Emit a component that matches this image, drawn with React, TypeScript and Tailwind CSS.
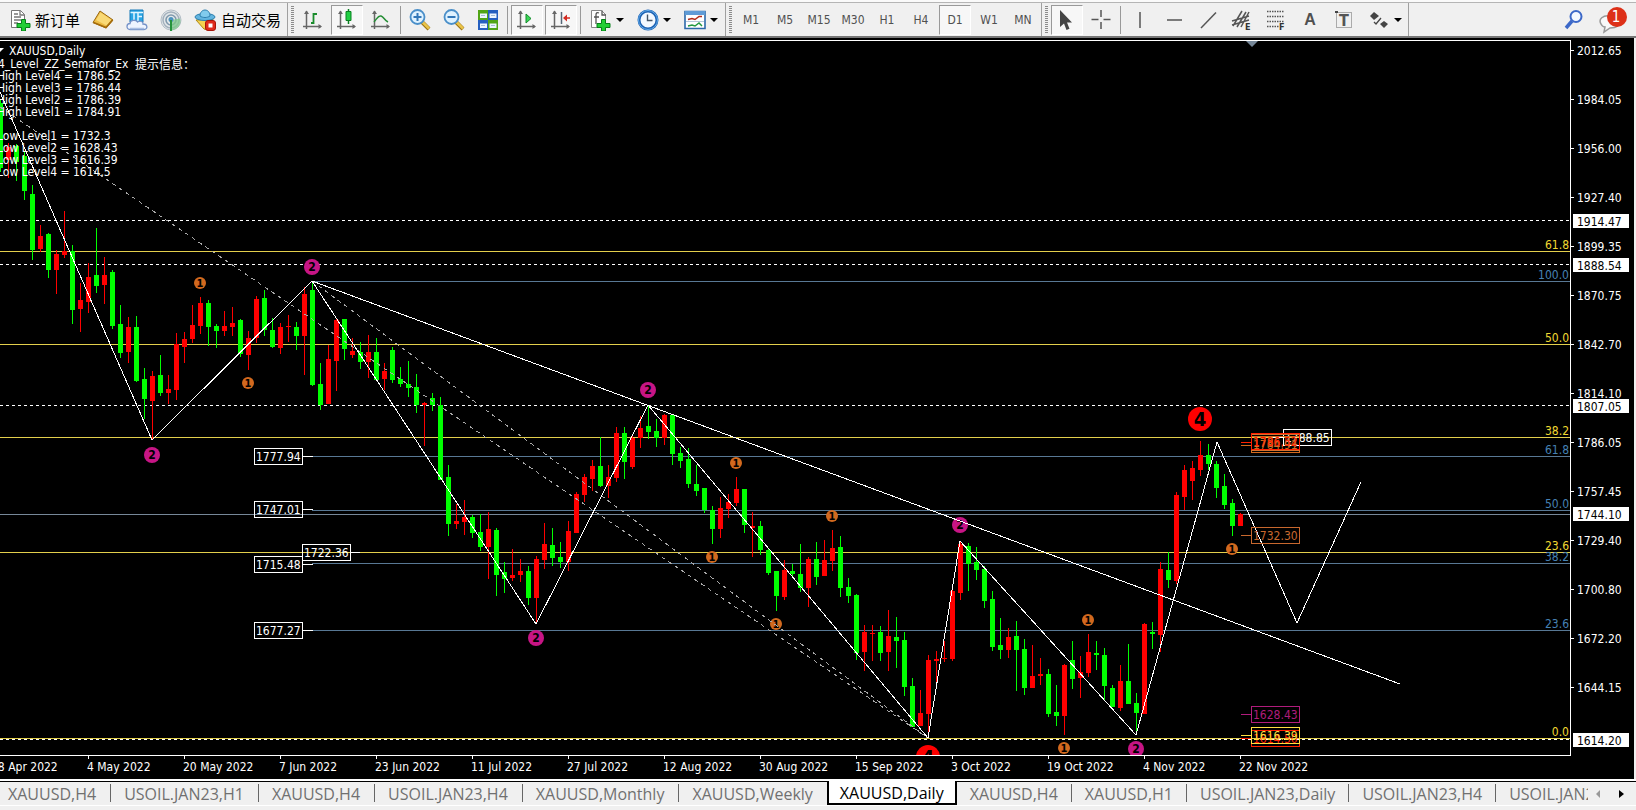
import type { ReactNode } from "react";
import { clsx } from "clsx";

type Candle = [color: "r" | "g", high: number, top: number, bottom: number, low: number];

// one candle every 8 units, starting at the left edge of the plot
const candles: Candle[] = [
  ["g", 100, 103, 168, 172], ["r", 143, 147, 160, 178], ["g", 144, 146, 162, 181], ["g", 152, 156, 191, 200],
  ["g", 185, 194, 250, 260], ["r", 225, 236, 249, 252], ["g", 233, 234, 270, 278], ["r", 250, 254, 270, 294],
  ["r", 211, 251, 255, 258], ["g", 245, 251, 310, 324], ["r", 283, 300, 309, 332], ["r", 263, 277, 302, 313],
  ["g", 228, 275, 286, 293], ["r", 257, 275, 285, 304], ["g", 270, 272, 326, 329], ["g", 305, 324, 353, 358],
  ["r", 317, 327, 352, 363], ["g", 316, 327, 381, 382], ["g", 368, 379, 399, 419], ["r", 371, 376, 401, 440],
  ["g", 355, 375, 393, 396], ["r", 375, 389, 393, 404], ["r", 333, 344, 390, 400], ["r", 332, 339, 347, 363],
  ["r", 305, 325, 339, 343], ["r", 297, 303, 326, 334], ["g", 300, 303, 327, 346], ["g", 324, 326, 331, 348],
  ["r", 311, 326, 331, 336], ["r", 307, 323, 327, 336], ["g", 319, 320, 354, 357], ["r", 331, 338, 355, 370],
  ["r", 296, 299, 338, 343], ["g", 290, 298, 330, 336], ["g", 318, 330, 347, 348], ["r", 323, 327, 348, 354],
  ["r", 315, 326, 327, 342], ["g", 322, 327, 336, 350], ["r", 287, 294, 336, 375], ["g", 282, 290, 385, 386],
  ["g", 363, 384, 405, 410], ["r", 345, 359, 404, 404], ["r", 319, 320, 361, 391], ["g", 319, 319, 349, 360],
  ["r", 338, 351, 355, 358], ["g", 342, 352, 362, 369], ["r", 335, 352, 362, 378], ["g", 338, 352, 380, 381],
  ["r", 363, 371, 379, 390], ["g", 347, 350, 380, 383], ["g", 367, 379, 384, 387], ["g", 361, 384, 388, 397],
  ["g", 374, 387, 405, 413], ["r", 402, 403, 405, 446], ["g", 393, 398, 405, 411], ["g", 397, 405, 480, 480],
  ["g", 465, 477, 524, 536], ["r", 504, 521, 524, 529], ["r", 500, 517, 522, 535], ["g", 515, 517, 533, 538],
  ["g", 514, 532, 547, 551], ["r", 512, 529, 547, 579], ["g", 528, 530, 575, 596], ["g", 562, 572, 579, 593],
  ["r", 549, 575, 578, 581], ["r", 559, 571, 575, 582], ["g", 566, 571, 598, 605], ["r", 556, 559, 598, 624],
  ["r", 523, 544, 560, 569], ["g", 528, 545, 558, 566], ["g", 542, 557, 562, 568], ["r", 521, 531, 562, 571],
  ["r", 492, 494, 533, 533], ["r", 474, 477, 495, 502], ["r", 460, 466, 479, 491], ["g", 437, 466, 486, 487],
  ["r", 465, 477, 486, 498], ["r", 427, 433, 478, 482], ["g", 427, 433, 462, 479], ["r", 436, 438, 467, 469],
  ["r", 416, 428, 438, 448], ["g", 405, 426, 432, 439], ["g", 419, 431, 438, 447], ["r", 414, 415, 438, 445],
  ["g", 415, 415, 454, 465], ["g", 447, 453, 461, 468], ["g", 448, 459, 484, 488], ["g", 465, 484, 491, 496],
  ["g", 488, 488, 510, 513], ["g", 506, 510, 529, 544], ["r", 497, 508, 529, 538], ["r", 494, 502, 509, 518],
  ["r", 477, 489, 503, 506], ["g", 489, 489, 525, 533], ["r", 512, 526, 528, 557], ["g", 521, 526, 550, 555],
  ["g", 548, 550, 573, 575], ["g", 571, 571, 596, 611], ["r", 560, 570, 597, 600], ["g", 564, 571, 574, 578],
  ["g", 544, 574, 588, 592], ["r", 557, 559, 588, 607], ["g", 542, 559, 577, 585], ["r", 540, 560, 576, 576],
  ["r", 530, 548, 561, 571], ["g", 536, 547, 588, 597], ["g", 578, 587, 596, 603], ["g", 594, 595, 653, 660],
  ["r", 625, 632, 652, 671], ["r", 625, 633, 634, 661], ["g", 626, 632, 653, 661], ["r", 610, 636, 652, 671],
  ["g", 617, 637, 641, 668], ["g", 632, 640, 687, 696], ["g", 678, 686, 727, 727], ["r", 690, 713, 726, 726],
  ["r", 655, 660, 714, 737], ["r", 651, 659, 661, 686], ["r", 641, 658, 659, 662], ["r", 590, 591, 659, 661],
  ["r", 541, 544, 593, 600], ["g", 543, 546, 564, 591], ["g", 547, 562, 570, 580], ["g", 566, 569, 601, 608],
  ["g", 591, 599, 647, 651], ["g", 618, 645, 650, 659], ["r", 628, 637, 650, 658], ["g", 621, 636, 650, 691],
  ["g", 639, 649, 688, 695], ["r", 645, 676, 688, 688], ["r", 658, 674, 676, 685], ["g", 669, 674, 714, 717],
  ["g", 685, 712, 716, 726], ["r", 664, 665, 716, 735], ["g", 641, 660, 679, 689], ["r", 656, 672, 678, 698],
  ["r", 634, 652, 673, 677], ["g", 641, 653, 655, 670], ["g", 648, 655, 686, 700], ["g", 685, 688, 707, 707],
  ["r", 665, 681, 708, 711], ["g", 644, 681, 704, 704], ["g", 693, 703, 713, 735], ["r", 623, 624, 714, 714],
  ["g", 622, 632, 634, 649], ["r", 562, 569, 635, 652], ["g", 552, 570, 580, 588], ["r", 492, 495, 581, 584],
  ["r", 465, 470, 497, 510], ["r", 461, 468, 481, 500], ["r", 441, 455, 470, 476], ["g", 444, 455, 464, 470],
  ["g", 461, 464, 488, 498], ["g", 474, 486, 505, 509], ["g", 499, 503, 526, 536], ["r", 513, 514, 526, 526]
];

const goldLevels = [
  { y: 251, label: "61.8" },
  { y: 344, label: "50.0" },
  { y: 437, label: "38.2" },
  { y: 552, label: "23.6" },
  { y: 738, label: "0.0" }
];

const steelLevels = [
  { y: 281, label: "100.0" },
  { y: 456, label: "61.8" },
  { y: 510, label: "50.0" },
  { y: 563, label: "38.2" },
  { y: 630, label: "23.6" }
];

const dashedLevels = [220, 264, 405, 739];

const markers = [
  { x: 200, y: 283, n: 1 }, { x: 248, y: 383, n: 1 }, { x: 712, y: 557, n: 1 }, { x: 736, y: 463, n: 1 },
  { x: 776, y: 624, n: 1 }, { x: 832, y: 516, n: 1 }, { x: 1064, y: 748, n: 1 }, { x: 1088, y: 620, n: 1 },
  { x: 1232, y: 549, n: 1 }, { x: 152, y: 455, n: 2 }, { x: 312, y: 267, n: 2 }, { x: 536, y: 638, n: 2 },
  { x: 648, y: 390, n: 2 }, { x: 960, y: 525, n: 2 }, { x: 1136, y: 749, n: 2 }, { x: 1200, y: 419, n: 4 },
  { x: 928, y: 757, n: 4 }
];

const scaleLabels = [
  "2012.65", "1984.05", "1956.00", "1927.40", "1899.35", "1870.75", "1842.70", "1814.10",
  "1786.05", "1757.45", "1729.40", "1700.80", "1672.20", "1644.15"
];

const scaleTags = [
  { y: 221, label: "1914.47" },
  { y: 265, label: "1888.54" },
  { y: 406, label: "1807.05" },
  { y: 514, label: "1744.10" },
  { y: 740, label: "1614.20" }
];

const dates = [
  "28 Apr 2022", "4 May 2022", "20 May 2022", "7 Jun 2022", "23 Jun 2022", "11 Jul 2022", "27 Jul 2022",
  "12 Aug 2022", "30 Aug 2022", "15 Sep 2022", "3 Oct 2022", "19 Oct 2022", "4 Nov 2022", "22 Nov 2022"
];

const comments = [
  { y: 80, text: "High Level4 = 1786.52" },
  { y: 92, text: "High Level3 = 1786.44" },
  { y: 104, text: "High Level2 = 1786.39" },
  { y: 116, text: "High Level1 = 1784.91" },
  { y: 140, text: "Low Level1 = 1732.3" },
  { y: 152, text: "Low Level2 = 1628.43" },
  { y: 164, text: "Low Level3 = 1616.39" },
  { y: 176, text: "Low Level4 = 1614.5" }
];

const tabs = [
  "XAUUSD,H4", "USOIL.JAN23,H1", "XAUUSD,H4", "USOIL.JAN23,H4", "XAUUSD,Monthly", "XAUUSD,Weekly",
  "XAUUSD,Daily", "XAUUSD,H4", "XAUUSD,H1", "USOIL.JAN23,Daily", "USOIL.JAN23,H4", "USOIL.JAN23,H1"
];
const activeTab = 6;

const timeframes = ["M1", "M5", "M15", "M30", "H1", "H4", "D1", "W1", "MN"];

function Icon({ children }: { children: ReactNode }) {
  return (
    <svg className="size-[22px] shrink-0" viewBox="0 0 22 22" fill="none" aria-hidden="true">
      {children}
    </svg>
  );
}

function ToolButton({
  label,
  pressed = false,
  menu = false,
  children
}: {
  label: string;
  pressed?: boolean;
  menu?: boolean;
  children: ReactNode;
}) {
  return (
    <button
      type="button"
      aria-label={label}
      aria-pressed={pressed || undefined}
      className={clsx(
        "flex h-[30px] shrink-0 items-center justify-center",
        menu ? "w-[47px] gap-1" : pressed ? "mx-px w-8 border border-t-[#999] border-r-white border-b-white border-l-[#999] bg-[#f7f7f7]" : "w-[34px]"
      )}
    >
      {children}
      {menu && (
        <svg className="h-1 w-2 shrink-0" viewBox="0 0 8 4" aria-hidden="true">
          <path d="M0 0h8L4 4z" fill="#000" />
        </svg>
      )}
    </button>
  );
}

function Separator() {
  return <span className="mx-[2px] h-7 w-px shrink-0 bg-[#999]" />;
}

function GroupEdge() {
  return (
    <>
      <span className="ml-px h-[34px] w-px shrink-0 bg-[#a0a0a0]" />
      <svg className="mr-[2px] ml-[3px] h-7 w-[3px] shrink-0" aria-hidden="true">
        <path d="M1.5 0v28" stroke="#8c8c8c" strokeWidth="3" strokeDasharray="1 1" />
      </svg>
    </>
  );
}

const axes = (
  <>
    <path d="M4.5 2v18M1 17.5h18" stroke="#666" strokeWidth="1.5" />
    <path d="M2 5l2.500-3.500L7 5zM16.500 15l3.500 2.500-3.500 2.500z" fill="#666" />
  </>
);

const plus = <path d="M11.500 10.500h4v4h4.500v4h-4.500V22h-4v-3.500H7v-4h4.500z" fill="#22cf35" stroke="#07801a" />;

const lens = (
  <>
    <path d="M13 13l7 7" stroke="#9c7414" strokeWidth="4" />
    <path d="M13.500 13l6.500 6.500" stroke="#eac44a" strokeWidth="2.500" />
    <circle cx="8.500" cy="8" r="7" fill="#dff2ff" stroke="#4a8fc9" strokeWidth="1.800" />
  </>
);

function Toolbar() {
  return (
    <header className="flex h-[38px] items-center overflow-hidden border-b-2 border-b-[#777] bg-[#f0f0f0] pt-1 pl-1 font-['DejaVu_Sans_Condensed','DejaVu_Sans','Noto_Sans_CJK_SC',sans-serif] text-xs text-[#505050] shadow-[inset_0_2px_0_#fafafa,inset_0_3px_0_#b5b5b5]">
      <button type="button" className="flex w-[82px] shrink-0 items-center gap-[3px] pl-[6px] font-['Noto_Sans_CJK_SC',sans-serif] text-[15px] leading-5 whitespace-nowrap text-black">
        <Icon>
          <path d="M1.500 1.500h9l4 4v13h-13z" fill="#fff" stroke="#777" />
          <path d="M10 1.500v4.500h4.500M4 5h4M4 8h7M4 11h7M4 14h4" stroke="#777" strokeWidth="1.300" />
          {plus}
        </Icon>
        新订单
      </button>
      <ToolButton label="历史">
        <Icon>
          <path d="M8 2l13 9-7 8L1 13.500z" fill="#edbd45" stroke="#9a6710" />
          <path d="M8.500 3.500l11 7.500-5 5.500L4 11z" fill="#f9d976" />
          <path d="M1.500 13.500l12.500 5L20.500 11" stroke="#a56c0b" strokeWidth="1.800" />
        </Icon>
      </ToolButton>
      <ToolButton label="云端">
        <Icon>
          <path d="M4 1h13v12H4z" fill="#29a5e4" stroke="#1478b8" />
          <path d="M4.500 3.500H17M8 4v8M12 4v8M12 7.500h4" stroke="#dff5ff" strokeWidth="1.500" />
          <path d="M4 20.500c-4 0-4-6 0-6 0-4 6-4 7.500-1.500 3-2 6 0 5.500 2 5 0 5 5.500 1 5.500z" fill="#eef4ff" stroke="#7592c8" strokeWidth="1.300" />
          <path d="M4 19.500h14" stroke="#a9bfe3" strokeWidth="1.500" />
        </Icon>
      </ToolButton>
      <ToolButton label="信号">
        <Icon>
          <circle cx="11" cy="11" r="10" fill="#e3e8ea" stroke="#b3bdc6" />
          <circle cx="11" cy="11" r="8" stroke="#a3b0bc" strokeWidth="1.500" />
          <circle cx="11" cy="11" r="5" stroke="#8299ac" strokeWidth="1.600" />
          <path d="M11 11l-1 10.500c8 0 12-7 10-12z" fill="#7cc98a" opacity=".75" />
          <circle cx="11" cy="10.500" r="2.500" fill="#4c93bd" />
          <path d="M11 11v11" stroke="#24933c" strokeWidth="2" />
        </Icon>
      </ToolButton>
      <button type="button" className="flex w-[98px] shrink-0 items-center gap-[5px] pl-[6px] font-['Noto_Sans_CJK_SC',sans-serif] text-[15px] leading-5 whitespace-nowrap text-black">
        <Icon>
          <path d="M2 11l17-1-5 11-4-1z" fill="#f5d250" stroke="#b18a14" />
          <ellipse cx="11" cy="8" rx="10" ry="3.500" fill="#62b5e0" stroke="#2d7fae" />
          <path d="M6 7c0-8 10-8 10 0-3 2-7 2-10 0z" fill="#81cbed" stroke="#2d7fae" />
          <rect x="11.500" y="11.500" width="10" height="10" rx="2.500" fill="#e02a1c" stroke="#a51409" />
          <path d="M14.500 14.500h4v4h-4z" fill="#fff" />
        </Icon>
        自动交易
      </button>
      <GroupEdge />
      <ToolButton label="柱状图">
        <Icon>{axes}<path d="M11.500 4v11M11.500 5H15M9 14h2.500" stroke="#198c2c" strokeWidth="1.800" /></Icon>
      </ToolButton>
      <ToolButton label="阴阳烛" pressed>
        <Icon>{axes}<path d="M12.500 0v15" stroke="#0a7f20" strokeWidth="1.500" /><path d="M10 2.500h5v9h-5z" fill="#20cf43" stroke="#0a8122" /></Icon>
      </ToolButton>
      <ToolButton label="折线图">
        <Icon>{axes}<path d="M4 13c3-3 4-7 7-6s3 4 7 6" stroke="#258e35" strokeWidth="1.500" /></Icon>
      </ToolButton>
      <Separator />
      <ToolButton label="放大">
        <Icon>{lens}<path d="M8.500 4v8M4.500 8h8" stroke="#3277b8" strokeWidth="2" /></Icon>
      </ToolButton>
      <ToolButton label="缩小">
        <Icon>{lens}<path d="M4.500 8h8" stroke="#3277b8" strokeWidth="2" /></Icon>
      </ToolButton>
      <ToolButton label="平铺窗口">
        <Icon>
          <path d="M1 1h10v10H1zM11 11h10v10H11z" fill="#51a516" />
          <path d="M11 1h10v10H11zM1 11h10v10H1z" fill="#255fc0" />
          <path d="M3 4.500h7V9H3zM12.500 4.500h7V9h-7zM3 14.500h7V19H3zM12.500 14.500h7V19h-7z" fill="#eef6ff" />
          <path d="M4 6.500h4M14 6.500h4M4 16.500h4M14 16.500h4" stroke="#a4bed2" />
        </Icon>
      </ToolButton>
      <Separator />
      <ToolButton label="自动滚动" pressed>
        <Icon>{axes}<path d="M10 5l5 4.500-5 4.500z" fill="#39d656" stroke="#128a2a" /></Icon>
      </ToolButton>
      <ToolButton label="图表平移" pressed>
        <Icon>{axes}<path d="M11.500 3v12" stroke="#567" strokeWidth="1.500" /><path d="M13 9l4-3.500v2.700h3v1.600h-3v2.700z" fill="#d32a22" /></Icon>
      </ToolButton>
      <Separator />
      <ToolButton label="指标" menu>
        <Icon>
          <path d="M1.500 1.500h10l4 4v13h-14z" fill="#fff" stroke="#888" />
          <path d="M9 4c-2-1-3 0-3 2v9M4 8h5M12 1.500V6h4" stroke="#555" strokeWidth="1.300" />
          {plus}
        </Icon>
      </ToolButton>
      <ToolButton label="周期" menu>
        <Icon>
          <circle cx="11" cy="11" r="9" fill="#f2f8ff" stroke="#1e63b5" strokeWidth="3" />
          <circle cx="11" cy="11" r="9.500" stroke="#65aeea" />
          <path d="M10.500 5.500v6h5" stroke="#456" strokeWidth="1.400" />
        </Icon>
      </ToolButton>
      <ToolButton label="模板" menu>
        <Icon>
          <path d="M1 2.500h20v17H1z" fill="#fff" stroke="#2c69aa" strokeWidth="1.600" />
          <path d="M1 2h20v4H1z" fill="#5f9bd6" />
          <path d="M4 10.500l4-1 3 1 4-3h3" stroke="#b22b19" strokeWidth="1.500" />
          <path d="M2 12.500h18" stroke="#b6c8da" />
          <path d="M4 17l4-1 3 1 4-3 3 3" stroke="#239840" strokeWidth="1.500" />
        </Icon>
      </ToolButton>
      <GroupEdge />
      {timeframes.map((frame) => (
        <ToolButton key={frame} label={frame} pressed={frame === "D1"}>{frame}</ToolButton>
      ))}
      <GroupEdge />
      <ToolButton label="光标" pressed>
        <Icon><path d="M4 1v17l4-3.500 2.500 6.500 3-1.200L11 13.500h5z" fill="#444" /></Icon>
      </ToolButton>
      <ToolButton label="十字准线">
        <Icon><path d="M11 1v7M11 13v7M1.500 10.500h7M13.500 10.500h7" stroke="#555" strokeWidth="1.500" /></Icon>
      </ToolButton>
      <Separator />
      <ToolButton label="垂直线"><Icon><path d="M11 3v16" stroke="#555" strokeWidth="1.500" /></Icon></ToolButton>
      <ToolButton label="水平线"><Icon><path d="M4 11h15" stroke="#555" strokeWidth="1.500" /></Icon></ToolButton>
      <ToolButton label="趋势线"><Icon><path d="M4 19L19 3.500" stroke="#555" strokeWidth="1.500" /></Icon></ToolButton>
      <ToolButton label="等距通道">
        <Icon>
          <path d="M2 17L11 2M6 18l9-15M10 18l8-15M1 12l17-5M1 16l17-5" stroke="#555" strokeWidth="1.500" />
          <text x="14" y="21" className="fill-[#333] text-[9px] font-bold">E</text>
        </Icon>
      </ToolButton>
      <ToolButton label="斐波那契">
        <Icon>
          <path d="M2 2.500h17M2 7.500h17M2 12.500h17M2 17.500h12" stroke="#555" strokeWidth="1.500" strokeDasharray="1.500 1" />
          <text x="14" y="21" className="fill-[#333] text-[9px] font-bold">F</text>
        </Icon>
      </ToolButton>
      <ToolButton label="文字"><span className="font-['Liberation_Sans',sans-serif] text-base font-bold">A</span></ToolButton>
      <ToolButton label="文字标签">
        <Icon>
          <path d="M3.500 3.500h15v15h-15z" stroke="#666" strokeDasharray="1 1" />
          <path d="M2 2h3v2H2z" fill="#444" />
          <text x="11" y="17" textAnchor="middle" className="fill-[#555] text-base font-bold">T</text>
        </Icon>
      </ToolButton>
      <ToolButton label="箭头" menu>
        <Icon>
          <path d="M6 3l5 4-5 4-4-4zM16 12l4 3-4 4-4-4z" fill="#444" />
          <path d="M6 13l2 2 5-6" stroke="#444" strokeWidth="1.300" />
        </Icon>
      </ToolButton>
      <span className="h-[34px] w-px shrink-0 bg-[#a0a0a0]" />
      <span className="flex-1" />
      <ToolButton label="搜索">
        <Icon>
          <path d="M9 12l-6 7" stroke="#3c68c8" strokeWidth="3.500" />
          <circle cx="13" cy="7.500" r="5.500" fill="#f4f8ff" stroke="#3c68c8" strokeWidth="2" />
        </Icon>
      </ToolButton>
      <button type="button" aria-label="消息" className="mr-[9px] ml-2 h-[34px] w-7 shrink-0">
        <svg className="h-[34px] w-7" viewBox="0 0 28 34" aria-hidden="true">
          <path d="M11 13c-7-1-12 3-9 8 1 2 3 3 4 3l-1 5 6-4c7 0 10-3 9-7" fill="#f8f8f8" stroke="#999" strokeWidth="1.500" />
          <circle cx="18" cy="14" r="10" fill="#dd3018" />
          <text x="17" y="19" textAnchor="middle" className="fill-white text-[15px]">1</text>
        </svg>
      </button>
    </header>
  );
}

function PriceTag({ x, y, color, label, tick }: { x: number; y: number; color: string; label: string; tick: [number, number, number] }) {
  return (
    <g>
      <path d={`M${tick[0]} ${tick[2]}.5H${tick[1]}`} stroke={color} />
      <rect x={x + 0.5} y={y + 0.5} width="48" height="16" stroke={color} fill="none" />
      <text x={x + 2} y={y + 13} fill={color}>{label}</text>
    </g>
  );
}

function Marker({ x, y, n }: { x: number; y: number; n: number }) {
  const radius = n === 1 ? 6 : n === 2 ? 8 : 12;
  const fill = n === 1 ? "#d2691e" : n === 2 ? "#c71585" : "#ff0000";
  return (
    <g>
      <circle cx={x} cy={y} r={radius} fill={fill} />
      <text
        x={x}
        y={y + (n === 4 ? 7 : 4)}
        textAnchor="middle"
        className={clsx("fill-black font-bold", n === 1 && "text-[11px]", n === 2 && "text-xs", n === 4 && "text-xl")}
      >
        {n}
      </text>
    </g>
  );
}

function Chart() {
  return (
    <svg
      className="block h-auto w-full bg-black font-['DejaVu_Sans_Condensed','DejaVu_Sans','Noto_Sans_CJK_SC',sans-serif] text-xs"
      viewBox="0 38 1634 741"
      fill="none"
      role="img"
      aria-label="XAUUSD,Daily"
    >
      <clipPath id="plot"><path d="M0 41h1570v714H0z" /></clipPath>
      <g clipPath="url(#plot)">
        <g shapeRendering="crispEdges">
          {steelLevels.map(({ y }) => <path key={y} d={`M312 ${y}.5H1570`} stroke="#587894" />)}
          <path d="M0 514.5H1570" stroke="#778899" />
          {goldLevels.map(({ y }) => <path key={y} d={`M0 ${y}.5H1570`} stroke="#e3cf4c" />)}
          {dashedLevels.map((y) => <path key={y} d={`M0 ${y}.5H1570`} stroke="#fff" strokeDasharray="3 3" />)}
          {candles.map(([color, high, top, bottom, low], i) => (
            <g key={i} fill={color === "r" ? "#ff0000" : "#00ff00"}>
              <rect x={i * 8} y={high} width="1" height={Math.max(low - high, 1)} />
              <rect x={i * 8 - 2} y={top} width="5" height={Math.max(bottom - top, 1)} />
            </g>
          ))}
        </g>
        {markers.map((marker) => <Marker key={`${marker.x}-${marker.y}`} {...marker} />)}
        <g shapeRendering="crispEdges">
          <path d="M0 107L928 738M312 281L928 738" stroke="#aaa" strokeDasharray="4 4" />
          <path d="M0 92L152 440L312 281L536 624L648 405L928 738L960 541L1136 735L1217 442L1297 623L1361 482M312 281L1400 684" stroke="#fff" />
        </g>
        {goldLevels.map(({ y, label }) => <text key={y} x="1569" y={y - 2} textAnchor="end" fill="#f0d832">{label}</text>)}
        {steelLevels.map(({ y, label }) => <text key={y} x="1569" y={y - 2} textAnchor="end" fill="#4682b4">{label}</text>)}

        <PriceTag x={254} y={448} color="#fff" label="1777.94" tick={[303, 313, 456]} />
        <PriceTag x={254} y={501} color="#fff" label="1747.01" tick={[303, 313, 509]} />
        <PriceTag x={254} y={556} color="#fff" label="1715.48" tick={[303, 313, 564]} />
        <PriceTag x={254} y={622} color="#fff" label="1677.27" tick={[303, 313, 630]} />
        <PriceTag x={302} y={544} color="#fff" label="1722.36" tick={[351, 360, 552]} />
        <PriceTag x={1283} y={429} color="#fff" label="1788.85" tick={[1273, 1283, 437]} />
        <PriceTag x={1251} y={436} color="#d2691e" label="1784.91" tick={[1241, 1251, 445]} />
        <PriceTag x={1251} y={434} color="#d8702c" label="1786.44" tick={[1241, 1251, 442]} />
        <PriceTag x={1251} y={433} color="#ff2000" label="1786.52" tick={[1241, 1251, 442]} />
        <PriceTag x={1251} y={527} color="#c8682e" label="1732.30" tick={[1241, 1251, 535]} />
        <PriceTag x={1251} y={706} color="#b01c7c" label="1628.43" tick={[1241, 1251, 714]} />
        <PriceTag x={1251} y={730} color="#ff2000" label="1614.50" tick={[1241, 1251, 738]} />
        <PriceTag x={1251} y={727} color="#ffe040" label="1616.39" tick={[1241, 1251, 735]} />

        <path d="M1246 41h12l-6 6z" fill="#778899" />
        <path d="M-4 48H4L0 52z" fill="#fff" />
        <g className="fill-white">
          <text x="9" y="55">XAUUSD,Daily</text>
          <text x="-2" y="68">4_Level_ZZ_Semafor_Ex</text>
          <text x="135" y="69">提示信息：</text>
          {comments.map(({ y, text }) => <text key={y} x="-3" y={y}>{text}</text>)}
        </g>
      </g>

      <path d="M0 40.5H1570.5V755.5H0" stroke="#fff" shapeRendering="crispEdges" />
      {scaleLabels.map((label, i) => (
        <g key={label}>
          <path d={`M1571 ${50 + i * 49}.5h3`} stroke="#fff" />
          <text x="1577" y={55 + i * 49} className="fill-white">{label}</text>
        </g>
      ))}
      {scaleTags.map(({ y, label }) => (
        <g key={label}>
          <path d={`M1573 ${y - 7}h56v14h-56z`} fill="#fff" />
          <text x="1577" y={y + 5} className="fill-black">{label}</text>
        </g>
      ))}
      {dates.map((label, i) => (
        <g key={label}>
          <path d={`M${96 * i - 8}.5 756v3`} stroke="#fff" />
          <text x={96 * i - 9} y="771" className="fill-white">{label}</text>
        </g>
      ))}
    </svg>
  );
}

function ChartTabs() {
  return (
    <nav className="flex h-6 border-t border-black bg-[#f0f0f0] pr-[2px] font-['Open_Sans',sans-serif] text-base leading-5 text-[#707070]">
      <div className="-mt-px flex min-w-0 flex-1 overflow-hidden">
        {tabs.map((tab, i) => (
          <button
            key={i}
            type="button"
            aria-current={i === activeTab ? "page" : undefined}
            className={clsx(
              "flex h-6 shrink-0 items-center pt-px whitespace-nowrap",
              i === 0 && "pr-[14px] pl-2",
              i > 0 && i < activeTab && "pr-[14px] pl-[13px]",
              i > activeTab && "px-[13px]",
              i === activeTab && "border-r-2 border-b-2 border-l-2 border-black bg-white px-[11px] pt-[3px] text-black"
            )}
          >
            {tab}
          </button>
        )).flatMap((node, i) =>
          i === 0 || i === activeTab || i === activeTab + 1
            ? [node]
            : [<span key={`line-${i}`} className="mt-[3px] h-[18px] w-px shrink-0 bg-[#666]" />, node]
        )}
      </div>
      <button type="button" aria-label="向左" className="flex w-5 items-center justify-center">
        <svg className="h-2 w-1" viewBox="0 0 4 8"><path d="M4 0v8L0 4z" fill="#999" /></svg>
      </button>
      <button type="button" aria-label="向右" className="flex w-[26px] items-center justify-center">
        <svg className="h-2 w-[5px]" viewBox="0 0 5 8"><path d="M0 0v8l5-4z" fill="#000" /></svg>
      </button>
    </nav>
  );
}

export default function App() {
  return (
    <div className="flex min-h-screen flex-col overflow-hidden bg-[#f0f0f0]">
      <Toolbar />
      <main className="border-b-2 border-white pr-[2px]">
        <Chart />
      </main>
      <ChartTabs />
      <div className="h-px bg-white" />
    </div>
  );
}
